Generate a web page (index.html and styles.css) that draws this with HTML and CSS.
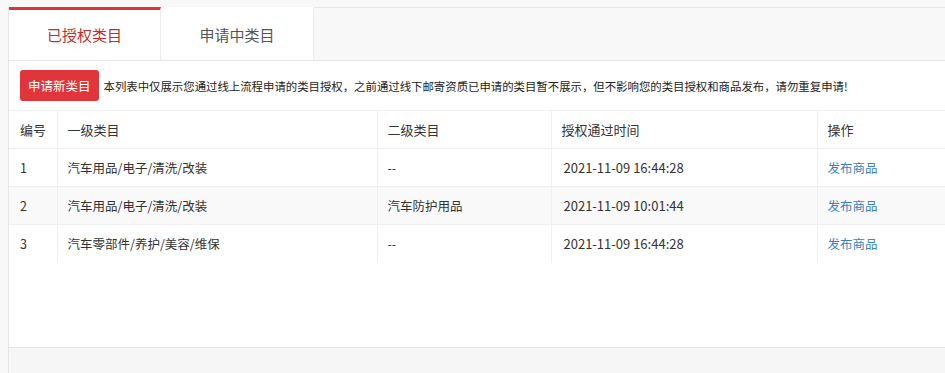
FILE: index.html
```html
<!DOCTYPE html>
<html lang="zh-CN">
<head>
    <meta charset="UTF-8">
    <title>类目授权</title>
    <link rel="stylesheet" href="styles.css">
</head>
<body>
    <div class="panel">
        <div class="tabs">
            <div class="tab active">已授权类目</div>
            <div class="tab">申请中类目</div>
        </div>

        <div class="content">
            <div class="notice">
                <button class="btn-apply">申请新类目</button>
                <span class="notice-text">本列表中仅展示您通过线上流程申请的类目授权，之前通过线下邮寄资质已申请的类目暂不展示，但不影响您的类目授权和商品发布，请勿重复申请!</span>
            </div>

            <table class="cat-table">
                <thead>
                    <tr>
                        <th class="c-no">编号</th>
                        <th class="c-first">一级类目</th>
                        <th class="c-second">二级类目</th>
                        <th class="c-time">授权通过时间</th>
                        <th>操作</th>
                    </tr>
                </thead>
                <tbody>
                    <tr>
                        <td>1</td>
                        <td>汽车用品/电子/清洗/改装</td>
                        <td>--</td>
                        <td class="time">2021-11-09 16:44:28</td>
                        <td><a href="#">发布商品</a></td>
                    </tr>
                    <tr>
                        <td>2</td>
                        <td>汽车用品/电子/清洗/改装</td>
                        <td>汽车防护用品</td>
                        <td class="time">2021-11-09 10:01:44</td>
                        <td><a href="#">发布商品</a></td>
                    </tr>
                    <tr>
                        <td>3</td>
                        <td>汽车零部件/养护/美容/维保</td>
                        <td>--</td>
                        <td class="time">2021-11-09 16:44:28</td>
                        <td><a href="#">发布商品</a></td>
                    </tr>
                </tbody>
            </table>
        </div>

        <div class="footer"></div>
    </div>
</body>
</html>
```

FILE: styles.css
```css
body {
    margin: 0;
    padding: 7px 0 0 8px;
    background-color: #f8f8f8;
    font-family: "Microsoft YaHei", "Noto Sans CJK SC", sans-serif;
    font-size: 12px;
    color: #333;
}

.panel {
    background-color: #fff;
    border-top: 1px solid #e6e6e6;
    border-left: 1px solid #e6e6e6;
    height: 365px;
    display: flex;
    flex-direction: column;
}

.tabs {
    display: flex;
    height: 52px;
    background-color: #f8f8f8;
    border-bottom: 1px solid #e8e8e8;
}

.tab {
    width: 153px;
    height: 53px;
    margin-top: -1px;
    box-sizing: border-box;
    background-color: #fff;
    border-top: 3px solid transparent;
    border-right: 1px solid #ececec;
    font-size: 15px;
    color: #555;
    text-align: center;
    line-height: 50px;
}

.tab.active {
    width: 152px;
    border-top-color: #d9363b;
    color: #c7292e;
}

.content {
    flex: 1;
    border-bottom: 1px solid #e8e8e8;
}

.notice {
    display: flex;
    align-items: center;
    height: 40px;
    padding: 9px 0 0 11px;
    box-sizing: border-box;
    white-space: nowrap;
}

.btn-apply {
    height: 31px;
    padding: 0 8px;
    margin-right: 5px;
    background-color: #e0353b;
    color: #fff;
    border: none;
    border-radius: 3px;
    font-family: inherit;
    font-size: 12.5px;
    cursor: pointer;
}

.notice-text {
    font-size: 11.4px;
    color: #222;
}

.cat-table {
    border-collapse: collapse;
    width: 100%;
    margin-top: 9px;
    font-size: 12.5px;
}

.cat-table th,
.cat-table td {
    height: 38px;
    padding: 0 10px;
    text-align: left;
    border-top: 1px solid #f0f0f0;
    border-left: 1px solid #f0f0f0;
    box-sizing: border-box;
}

.cat-table th:first-child,
.cat-table td:first-child {
    border-left: none;
    padding-left: 11px;
}

.cat-table th {
    font-weight: normal;
    font-size: 13px;
}

.cat-table tbody tr:nth-child(even) {
    background-color: #f9f9f9;
}

.cat-table .time {
    padding-left: 12px;
    font-size: 13px;
}

.c-no { width: 48px; }
.c-first { width: 320px; }
.c-second { width: 174px; }
.c-time { width: 266px; }

.cat-table a {
    color: #3a7fc1;
    text-decoration: none;
}

.footer {
    height: 25px;
    background-color: #f6f6f6;
}
```
